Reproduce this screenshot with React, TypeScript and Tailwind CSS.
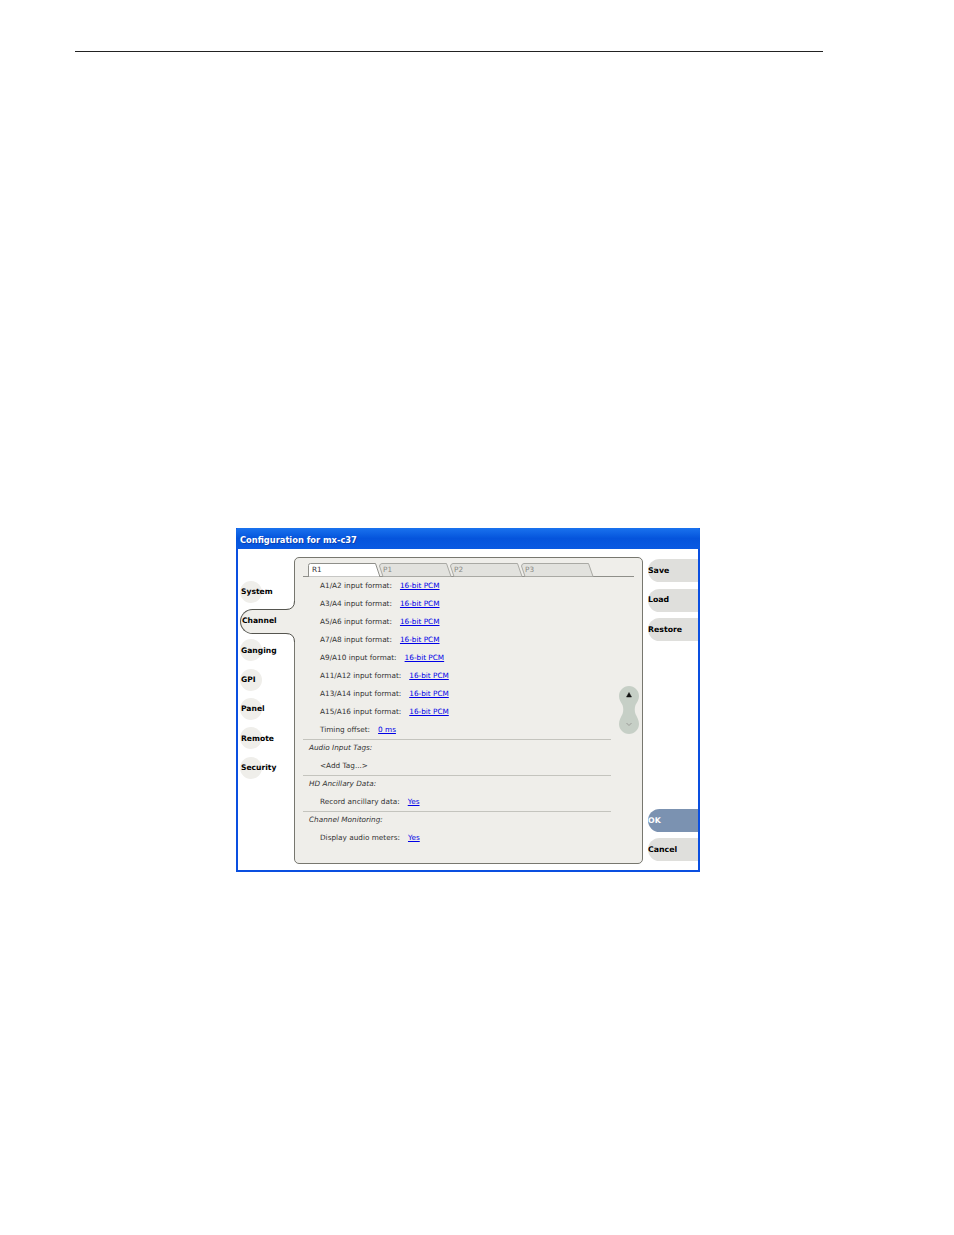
const NAV = ["System", "Channel", "Ganging", "GPI", "Panel", "Remote", "Security"];

const FORMATS = [
  { label: "A1/A2 input format:", value: "16-bit PCM" },
  { label: "A3/A4 input format:", value: "16-bit PCM" },
  { label: "A5/A6 input format:", value: "16-bit PCM" },
  { label: "A7/A8 input format:", value: "16-bit PCM" },
  { label: "A9/A10 input format:", value: "16-bit PCM" },
  { label: "A11/A12 input format:", value: "16-bit PCM" },
  { label: "A13/A14 input format:", value: "16-bit PCM" },
  { label: "A15/A16 input format:", value: "16-bit PCM" },
  { label: "Timing offset:", value: "0 ms" },
];

const TABS = ["R1", "P1", "P2", "P3"];

function Row({ label, value }: { label: string; value?: string }) {
  return (
    <div className="flex h-[18px] items-center gap-[8px] pl-[17px] whitespace-nowrap">
      <span>{label}</span>
      {value && <a className="text-[#0000e6] underline">{value}</a>}
    </div>
  );
}

function Section({ title }: { title: string }) {
  return (
    <div className="h-[18px] w-[308px] border-t border-[#c4c4be] pl-[6px] pt-[4px] italic whitespace-nowrap">
      {title}
    </div>
  );
}

function Tab({ name, active }: { name: string; active: boolean }) {
  return (
    <div className="relative h-[14px] w-[71px]">
      <svg className="absolute inset-0" width="84" height="14" viewBox="0 0 84 14">
        <path
          d={active ? "M0.5 14V2.5Q0.5 0.5 2.5 0.5H67.5L72 14Z" : "M4 13.500L0.5 3Q1 0.5 3 0.5H67.5L72 13.500Z"}
          fill={active ? "#ffffff" : "#e2e2de"}
          stroke={active ? "#8f8f8a" : "#a9a9a4"}
          strokeWidth="1"
        />
      </svg>
      <span className={`absolute left-[4px] top-[3px] ${active ? "text-[#333]" : "text-[#8a8a86]"}`}>{name}</span>
    </div>
  );
}

function SideButton({ label, primary }: { label: string; primary?: boolean }) {
  return (
    <div
      className={`flex h-[23px] w-[50px] items-center rounded-l-full text-[7.800px] font-bold ${
        primary ? "bg-[#7b92b1] text-white" : "bg-[#dfdfdc] text-black"
      }`}
    >
      {label}
    </div>
  );
}

export default function App() {
  return (
    <div className="h-[1235px] w-[954px] overflow-hidden bg-white pt-[51px] font-['DejaVu_Sans',sans-serif]">
      <div className="ml-[75px] h-px w-[748px] bg-[#222]" />

      <div className="ml-[236px] mt-[476px] flex h-[344px] w-[464px] flex-col border-x-2 border-b-2 border-[#0a4fe0] text-[7.300px] leading-none text-[#333]">
        <div className="-mx-[2px] flex h-[21px] items-center rounded-t-[2px] bg-gradient-to-b from-[#1a72ee] via-[#0554dc] to-[#0a5ae2] pl-[4px] pt-[3px] text-[8.300px] font-bold text-white [text-shadow:1px_1px_0_#0a3fb0]">
          Configuration for mx-c37
        </div>

        <div className="flex flex-1 pt-[8px]">
          {/* left nav */}
          <div className="relative z-10 w-[56px] shrink-0 pt-[20px] text-[7.600px] text-black">
            {NAV.map((name) =>
              name === "Channel" ? (
                <div key={name} className="flex h-[29.350px] items-center">
                  <div className="relative ml-[2px] flex h-[25px] w-[55px] shrink-0 items-center rounded-l-full border-y border-l border-[#55554f] bg-[#efeeea] pl-[1px] font-bold">
                    {name}
                    <svg className="absolute right-0 top-[-9px]" width="9" height="9" viewBox="0 0 9 9">
                      <path d="M8.500 0Q8.500 8.500 0 8.500V9H9V0Z" fill="#efeeea" />
                      <path d="M8.500 0Q8.500 8.500 0 8.500" fill="none" stroke="#55554f" />
                    </svg>
                    <svg className="absolute bottom-[-9px] right-0" width="9" height="9" viewBox="0 0 9 9">
                      <path d="M8.500 9Q8.500 0.500 0 0.500V0H9V9Z" fill="#efeeea" />
                      <path d="M8.500 9Q8.500 0.500 0 0.500" fill="none" stroke="#55554f" />
                    </svg>
                  </div>
                </div>
              ) : (
                <div key={name} className="flex h-[29.350px] items-center">
                  <div className="ml-[2px] flex h-[22px] w-[22px] items-center rounded-full bg-[#efeeea] font-bold whitespace-nowrap">
                    <span className="ml-[1px]">{name}</span>
                  </div>
                </div>
              ),
            )}
          </div>

          {/* main panel */}
          <div className="relative h-[307px] w-[349px] rounded-[5px] border border-[#77776f] bg-[#efeeea] pl-[8px] pt-[5px]">
            <div className="flex h-[14px] w-[331px] border-b border-[#8f8f8a] pl-[5px]">
              {TABS.map((t, i) => (
                <Tab key={t} name={t} active={i === 0} />
              ))}
            </div>
            <div>
              {FORMATS.map((f) => (
                <Row key={f.label} label={f.label} value={f.value} />
              ))}
              <Section title="Audio Input Tags:" />
              <Row label="<Add Tag...>" />
              <Section title="HD Ancillary Data:" />
              <Row label="Record ancillary data:" value="Yes" />
              <Section title="Channel Monitoring:" />
              <Row label="Display audio meters:" value="Yes" />
            </div>

            {/* scroll control */}
            <svg className="absolute left-[323px] top-[127px]" width="22" height="50" viewBox="0 0 22 50">
              <path
                d="M11 1C5.500 1 1 5.500 1 11C1 15 3 17 4.500 20C5.500 23 5.500 26 4.500 29C3 32 1 35 1 39C1 44.500 5.500 49 11 49C16.500 49 21 44.500 21 39C21 35 19 32 17.500 29C16.500 26 16.500 23 17.500 20C19 17 21 15 21 11C21 5.500 16.500 1 11 1Z"
                fill="#c6cfc6"
              />
              <path d="M8.500 12L11 7.500L13.500 12Z" fill="#111" stroke="#111" strokeWidth="0.5" />
              <path d="M8.500 38L11 40.500L13.500 38" fill="none" stroke="#9c9c98" />
            </svg>
          </div>

          {/* right buttons */}
          <div className="ml-[5px] flex w-[50px] flex-col pt-[2px]">
            <div className="flex flex-col gap-[6.500px]">
              <SideButton label="Save" />
              <SideButton label="Load" />
              <SideButton label="Restore" />
            </div>
            <div className="mt-[168px] flex flex-col gap-[6px]">
              <SideButton label="OK" primary />
              <SideButton label="Cancel" />
            </div>
          </div>
        </div>
      </div>
    </div>
  );
}
